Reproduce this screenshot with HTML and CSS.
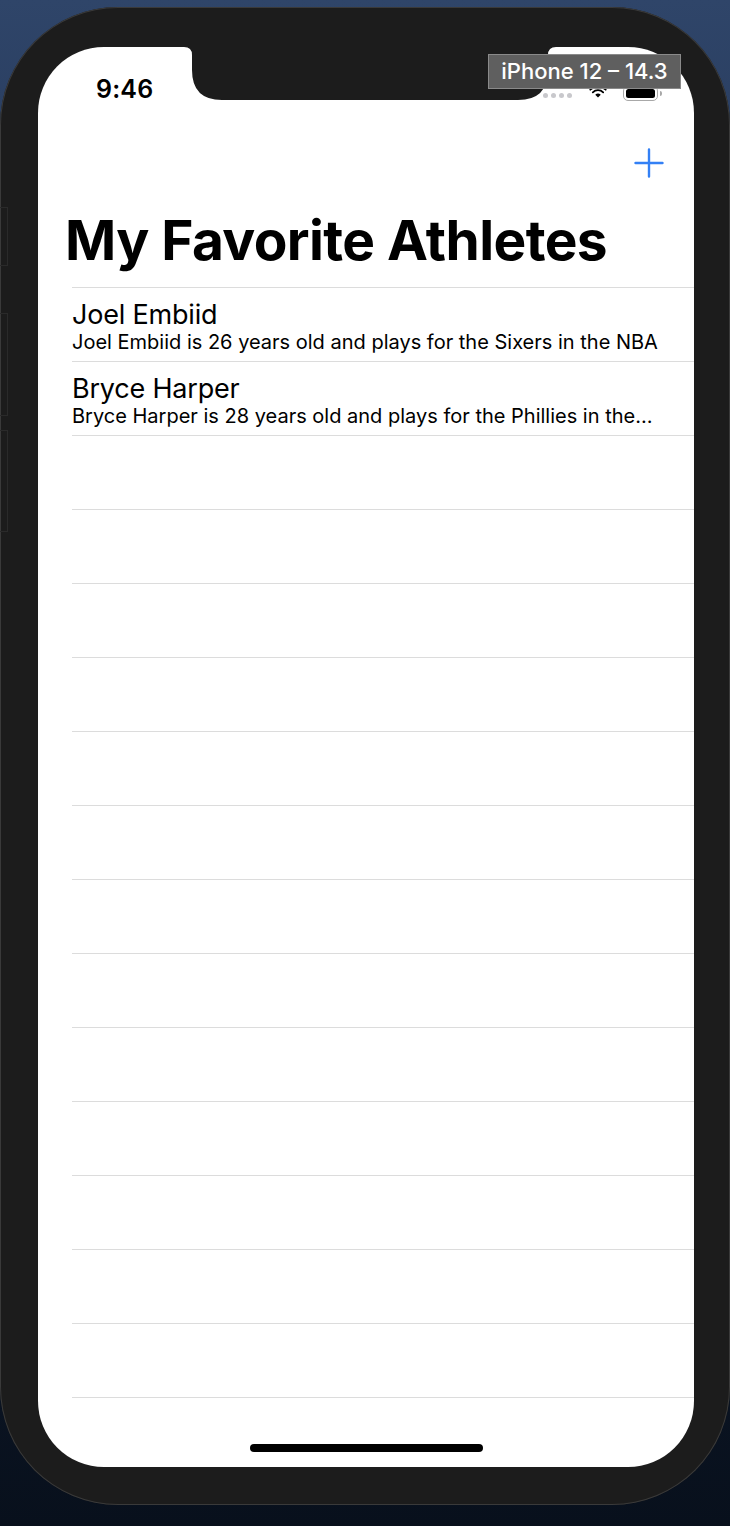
FILE: index.html
```html
<!DOCTYPE html>
<html lang="en">
<head>
<meta charset="utf-8">
<title>My Favorite Athletes</title>
<link rel="stylesheet" href="styles.css">
</head>
<body>
<div class="device">
  <span class="side-btn side-btn-1"></span>
  <span class="side-btn side-btn-2"></span>
  <span class="side-btn side-btn-3"></span>
  <div class="screen">
    <svg class="notch" width="372" height="53" viewBox="0 0 372 53" aria-hidden="true">
      <path d="M0 0 Q8 0 8 8 L8 23 Q8 53 38 53 L334 53 Q364 53 364 23 L364 8 Q364 0 372 0 Z" fill="#1c1c1c"/>
    </svg>
    <div class="status">
      <span class="time">9:46</span>
      <div class="status-icons">
        <span class="signal"><i></i><i></i><i></i><i></i></span>
        <svg class="wifi" width="18" height="13" viewBox="0 0 22 16" aria-hidden="true">
          <path d="M11 15.5 L7.6 12 A5 5 0 0 1 14.4 12 Z" fill="#000"/>
          <path d="M4.6 9 A9 9 0 0 1 17.4 9" stroke="#000" stroke-width="2.2" fill="none" stroke-linecap="round"/>
          <path d="M1.5 5.8 A13.5 13.5 0 0 1 20.5 5.8" stroke="#000" stroke-width="2.2" fill="none" stroke-linecap="round"/>
        </svg>
        <span class="battery"><span class="battery-fill"></span></span>
      </div>
    </div>
    <div class="nav">
      <svg class="plus" width="30" height="30" viewBox="0 0 30 30" aria-label="Add">
        <path d="M15 1.5 V28.5 M1.5 15 H28.5" stroke="#3380f5" stroke-width="2.4" stroke-linecap="round"/>
      </svg>
    </div>
    <h1 class="title">My Favorite Athletes</h1>
    <ul class="list">
      <li class="row">
        <div class="row-title">Joel Embiid</div>
        <div class="row-sub">Joel Embiid is 26 years old and plays for the Sixers in the NBA</div>
      </li>
      <li class="row">
        <div class="row-title">Bryce Harper</div>
        <div class="row-sub">Bryce Harper is 28 years old and plays for the Phillies in the MLB</div>
      </li>
      <li class="row"></li>
      <li class="row"></li>
      <li class="row"></li>
      <li class="row"></li>
      <li class="row"></li>
      <li class="row"></li>
      <li class="row"></li>
      <li class="row"></li>
      <li class="row"></li>
      <li class="row"></li>
      <li class="row"></li>
      <li class="row"></li>
      <li class="row"></li>
      <li class="row"></li>
    </ul>
    <span class="home-indicator"></span>
  </div>
</div>
<div class="sim-badge">iPhone 12 – 14.3</div>
</body>
</html>
```

FILE: styles.css
```css
html, body {
  margin: 0;
  padding: 0;
}

body {
  width: 730px;
  height: 1526px;
  overflow: hidden;
  background: linear-gradient(180deg, #2f4569 0%, #1f3050 30%, #111d32 65%, #08101c 100%);
  font-family: "Inter", "Noto Sans", sans-serif;
  color: #000;
  position: relative;
}

.device {
  position: relative;
  box-sizing: border-box;
  margin-top: 7px;
  width: 730px;
  height: 1498px;
  padding: 40px 36px 38px 38px;
  background: #1c1c1c;
  border-radius: 118px;
  box-shadow: inset 0 0 0 1px #3a3a3a;
}

.side-btn {
  position: absolute;
  left: 0;
  width: 7px;
  border: 1px solid #2a2a2a;
  border-left: none;
}
.side-btn-1 { top: 200px; height: 57px; }
.side-btn-2 { top: 306px; height: 101px; }
.side-btn-3 { top: 423px; height: 100px; }

.screen {
  position: relative;
  width: 656px;
  height: 1420px;
  background: #fff;
  border-radius: 66px;
  overflow: hidden;
}

.notch {
  position: absolute;
  left: 146px;
  top: 0;
  display: block;
}

.status {
  height: 60px;
  display: flex;
  justify-content: space-between;
  box-sizing: border-box;
}

.time {
  margin-top: 27px;
  margin-left: 58px;
  font-size: 25px;
  line-height: 30px;
  font-weight: 600;
  letter-spacing: 0.2px;
}

.status-icons {
  display: flex;
  align-items: center;
  gap: 13px;
  margin-top: 38px;
  margin-right: 36px;
  height: 14px;
}

.signal {
  display: flex;
  gap: 3px;
  align-items: center;
  margin-top: 7px;
}
.signal i {
  display: block;
  width: 5px;
  height: 5px;
  border-radius: 50%;
  background: #c8c8cc;
}

.wifi {
  display: block;
  margin-top: -1px;
  margin-left: 4px;
  margin-right: 3px;
}

.battery {
  position: relative;
  display: block;
  box-sizing: border-box;
  width: 35px;
  height: 15px;
  border: 1.5px solid #a8a8a8;
  border-radius: 5px;
  padding: 2px;
  margin-top: 2px;
}
.battery::after {
  content: "";
  position: absolute;
  right: -4.5px;
  top: 4px;
  width: 2px;
  height: 5px;
  border-radius: 0 2px 2px 0;
  background: #a8a8a8;
}
.battery-fill {
  display: block;
  height: 100%;
  background: #000;
  border-radius: 2.5px;
}

.nav {
  display: flex;
  justify-content: flex-end;
  padding-top: 41px;
  padding-right: 30px;
}
.plus {
  display: block;
}

.title {
  margin: 30px 0 15px;
  padding-left: 27px;
  font-size: 55px;
  line-height: 64px;
  font-weight: 700;
  letter-spacing: -0.6px;
}

.list {
  list-style: none;
  margin: 0 0 0 34px;
  padding: 0;
  border-top: 1px solid #dcdcdc;
}

.row {
  box-sizing: border-box;
  height: 74px;
  padding-top: 11px;
  border-bottom: 1px solid #dcdcdc;
}

.row-title {
  font-size: 27px;
  line-height: 31px;
  font-weight: 400;
  letter-spacing: -0.2px;
}

.row-sub {
  font-size: 20px;
  line-height: 24px;
  font-weight: 400;
  margin-right: 36px;
  white-space: nowrap;
  overflow: hidden;
  text-overflow: ellipsis;
}

.home-indicator {
  position: absolute;
  left: 212px;
  bottom: 15px;
  width: 233px;
  height: 8px;
  border-radius: 4px;
  background: #000;
}

.sim-badge {
  position: absolute;
  left: 488px;
  top: 54px;
  box-sizing: border-box;
  width: 193px;
  height: 35px;
  background: #5f5f5f;
  border: 1px solid #8a8a8a;
  color: #fff;
  font-size: 22px;
  line-height: 33px;
  font-weight: 500;
  text-align: center;
  white-space: nowrap;
}
```
